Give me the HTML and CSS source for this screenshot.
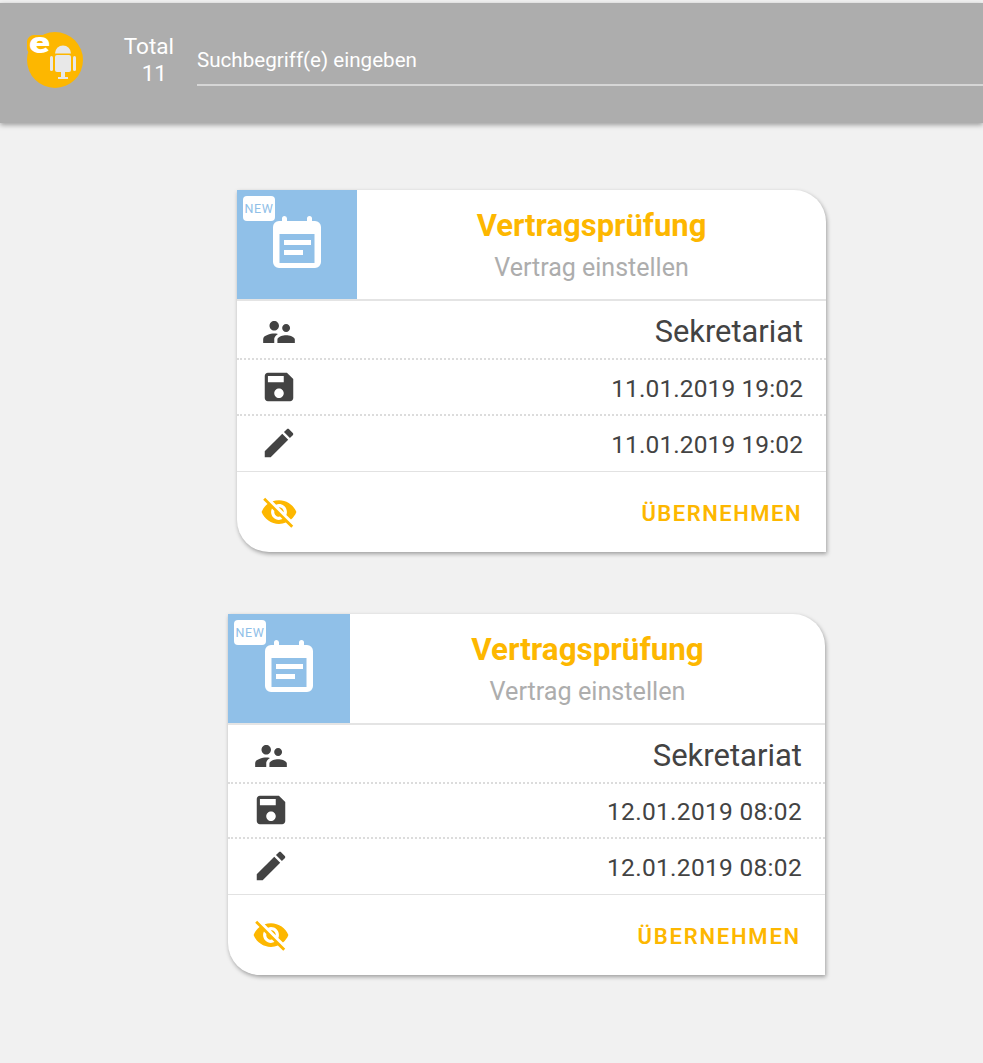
FILE: index.html
```html
<!DOCTYPE html>
<html lang="de">
<head>
    <meta charset="UTF-8">
    <title>Vertragsprüfung</title>
    <link rel="stylesheet" href="styles.css">
</head>
<body>
    <header class="topbar">
        <svg class="logo" viewBox="0 0 56 56">
            <circle cx="28" cy="28" r="28" fill="#fdb700"/>
            <path d="M0 9a7 7 0 0 1 7-6h10a7 7 0 0 1 8 6v8a6 6 0 0 1-6 6H7a7 7 0 0 1-7-6z" fill="#fdb700"/>
            <text class="logo-e" x="2" y="21" textLength="21" lengthAdjust="spacingAndGlyphs">e</text>
            <path d="M28 21.500a8 8 0 0 1 16 0z" fill="#e8e8e8"/>
            <rect x="28" y="23" width="16" height="17" rx="2" fill="#e8e8e8"/>
            <rect x="23" y="24" width="3" height="15" rx="1.500" fill="#e8e8e8"/>
            <rect x="46" y="24" width="3" height="15" rx="1.500" fill="#e8e8e8"/>
            <path d="M34 40h4v5h3v2H31v-2h3z" fill="#e8e8e8"/>
        </svg>
        <div class="total">
            <span>Total</span>
            <span class="total-count">11</span>
        </div>
        <input class="search" type="text" placeholder="Suchbegriff(e) eingeben">
    </header>

    <main class="list">
        <article class="card card-first">
            <div class="card-head">
                <div class="thumb">
                    <span class="badge">NEW</span>
                    <svg class="thumb-icon" viewBox="0 0 48 52">
                        <path d="M9 2.500a2.500 2.500 0 0 1 5 0V5h20V2.500a2.500 2.500 0 0 1 5 0V5h3a6 6 0 0 1 6 6v35a6 6 0 0 1-6 6H6a6 6 0 0 1-6-6V11a6 6 0 0 1 6-6h3z" fill="#fff"/>
                        <rect x="6.500" y="18" width="35" height="29" fill="#90c0e8"/>
                        <rect x="11" y="24" width="27" height="5" fill="#fff"/>
                        <rect x="11" y="34" width="19" height="5" fill="#fff"/>
                    </svg>
                </div>
                <div class="card-title">
                    <h2>Vertragsprüfung</h2>
                    <p>Vertrag einstellen</p>
                </div>
            </div>
            <div class="row row-group">
                <svg class="icon icon-group" viewBox="0 0 24 24"><path d="M16.500 12c1.380 0 2.490-1.120 2.490-2.500S17.880 7 16.500 7C15.120 7 14 8.120 14 9.500s1.120 2.500 2.500 2.500zM9 11c1.660 0 2.990-1.340 2.990-3S10.660 5 9 5C7.340 5 6 6.340 6 8s1.340 3 3 3zm7.500 3c-1.830 0-5.500.92-5.500 2.750V19h11v-2.250c0-1.830-3.670-2.750-5.500-2.750zM9 13c-2.330 0-7 1.170-7 3.500V19h7v-2.250c0-.85.33-2.340 2.370-3.470C10.500 13.100 9.660 13 9 13z"/></svg>
                <span>Sekretariat</span>
            </div>
            <div class="row">
                <svg class="icon" viewBox="0 0 24 24"><path d="M17 3H5c-1.110 0-2 .9-2 2v14c0 1.100.89 2 2 2h14c1.100 0 2-.9 2-2V7l-4-4zm-5 16c-1.660 0-3-1.340-3-3s1.340-3 3-3 3 1.340 3 3-1.340 3-3 3zm3-10H5V5h10v4z"/></svg>
                <span>11.01.2019 19:02</span>
            </div>
            <div class="row row-last">
                <svg class="icon" viewBox="0 0 24 24"><path d="M3 17.250V21h3.750L17.810 9.940l-3.750-3.750L3 17.250zM20.710 7.040c.39-.39.39-1.020 0-1.410l-2.340-2.340c-.39-.39-1.020-.39-1.410 0l-1.830 1.830 3.750 3.750 1.830-1.830z"/></svg>
                <span>11.01.2019 19:02</span>
            </div>
            <div class="card-actions">
                <svg class="icon icon-eye" viewBox="0 0 24 24"><path d="M12 7c2.760 0 5 2.240 5 5 0 .65-.13 1.260-.36 1.830l2.920 2.920c1.510-1.260 2.700-2.890 3.430-4.750-1.730-4.390-6-7.500-11-7.500-1.400 0-2.740.25-3.980.7l2.160 2.160C10.740 7.130 11.350 7 12 7zM2 4.270l2.280 2.280.46.46C3.080 8.300 1.780 10.020 1 12c1.730 4.390 6 7.500 11 7.500 1.550 0 3.030-.3 4.380-.84l.42.42L19.730 22 21 20.730 3.270 3 2 4.270zM7.530 9.800l1.550 1.550c-.05.21-.08.43-.08.65 0 1.660 1.340 3 3 3 .22 0 .44-.03.65-.08l1.550 1.550c-.67.33-1.410.53-2.200.53-2.760 0-5-2.240-5-5 0-.79.2-1.530.53-2.200zm4.310-.78l3.150 3.150.02-.16c0-1.660-1.340-3-3-3l-.17.01z"/></svg>
                <span class="action">ÜBERNEHMEN</span>
            </div>
        </article>

        <article class="card card-second">
            <div class="card-head">
                <div class="thumb">
                    <span class="badge">NEW</span>
                    <svg class="thumb-icon" viewBox="0 0 48 52">
                        <path d="M9 2.500a2.500 2.500 0 0 1 5 0V5h20V2.500a2.500 2.500 0 0 1 5 0V5h3a6 6 0 0 1 6 6v35a6 6 0 0 1-6 6H6a6 6 0 0 1-6-6V11a6 6 0 0 1 6-6h3z" fill="#fff"/>
                        <rect x="6.500" y="18" width="35" height="29" fill="#90c0e8"/>
                        <rect x="11" y="24" width="27" height="5" fill="#fff"/>
                        <rect x="11" y="34" width="19" height="5" fill="#fff"/>
                    </svg>
                </div>
                <div class="card-title">
                    <h2>Vertragsprüfung</h2>
                    <p>Vertrag einstellen</p>
                </div>
            </div>
            <div class="row row-group">
                <svg class="icon icon-group" viewBox="0 0 24 24"><path d="M16.500 12c1.380 0 2.490-1.120 2.490-2.500S17.880 7 16.500 7C15.120 7 14 8.120 14 9.500s1.120 2.500 2.500 2.500zM9 11c1.660 0 2.990-1.340 2.990-3S10.660 5 9 5C7.340 5 6 6.340 6 8s1.340 3 3 3zm7.500 3c-1.830 0-5.500.92-5.500 2.750V19h11v-2.250c0-1.830-3.670-2.750-5.500-2.750zM9 13c-2.330 0-7 1.170-7 3.500V19h7v-2.250c0-.85.33-2.340 2.370-3.470C10.500 13.100 9.660 13 9 13z"/></svg>
                <span>Sekretariat</span>
            </div>
            <div class="row">
                <svg class="icon" viewBox="0 0 24 24"><path d="M17 3H5c-1.110 0-2 .9-2 2v14c0 1.100.89 2 2 2h14c1.100 0 2-.9 2-2V7l-4-4zm-5 16c-1.660 0-3-1.340-3-3s1.340-3 3-3 3 1.340 3 3-1.340 3-3 3zm3-10H5V5h10v4z"/></svg>
                <span>12.01.2019 08:02</span>
            </div>
            <div class="row row-last">
                <svg class="icon" viewBox="0 0 24 24"><path d="M3 17.250V21h3.750L17.810 9.940l-3.750-3.750L3 17.250zM20.710 7.040c.39-.39.39-1.020 0-1.410l-2.340-2.340c-.39-.39-1.020-.39-1.410 0l-1.830 1.830 3.750 3.750 1.830-1.830z"/></svg>
                <span>12.01.2019 08:02</span>
            </div>
            <div class="card-actions">
                <svg class="icon icon-eye" viewBox="0 0 24 24"><path d="M12 7c2.760 0 5 2.240 5 5 0 .65-.13 1.260-.36 1.830l2.920 2.920c1.510-1.260 2.700-2.890 3.430-4.750-1.730-4.390-6-7.500-11-7.500-1.400 0-2.740.25-3.980.7l2.160 2.160C10.740 7.130 11.350 7 12 7zM2 4.270l2.280 2.280.46.46C3.080 8.300 1.780 10.020 1 12c1.730 4.390 6 7.500 11 7.500 1.550 0 3.030-.3 4.380-.84l.42.42L19.730 22 21 20.730 3.270 3 2 4.270zM7.530 9.800l1.550 1.550c-.05.21-.08.43-.08.65 0 1.660 1.340 3 3 3 .22 0 .44-.03.65-.08l1.550 1.550c-.67.33-1.410.53-2.200.53-2.760 0-5-2.240-5-5 0-.79.2-1.530.53-2.200zm4.310-.78l3.150 3.150.02-.16c0-1.660-1.340-3-3-3l-.17.01z"/></svg>
                <span class="action">ÜBERNEHMEN</span>
            </div>
        </article>
    </main>
</body>
</html>
```

FILE: styles.css
```css
* {
    box-sizing: border-box;
}

html, body {
    height: 100%;
}

body {
    margin: 0;
    padding-top: 3px;
    background: #f1f1f1;
    font-family: Roboto, "Liberation Sans", sans-serif;
    color: #434343;
    overflow: hidden;
}

.topbar {
    display: flex;
    align-items: flex-start;
    height: 120px;
    padding: 29px 0 0 27px;
    background: #adadad;
    box-shadow: 0 2px 5px rgba(0, 0, 0, 0.35);
}

.logo {
    width: 56px;
    height: 56px;
    flex: none;
    overflow: visible;
}

.logo-e {
    font-family: Roboto, sans-serif;
    font-weight: 900;
    font-size: 30px;
    fill: #fff;
}

.total {
    display: flex;
    flex-direction: column;
    align-items: flex-end;
    width: 91px;
    margin-top: 1px;
    font-size: 22.500px;
    line-height: 27px;
    color: #fff;
}

.total-count {
    padding-right: 7px;
}

.search {
    flex: 1;
    min-width: 0;
    height: 54px;
    margin-left: 23px;
    padding: 3px 0 0;
    border: none;
    border-bottom: 2px solid #d6d6d6;
    background: transparent;
    font-family: inherit;
    font-size: 20.600px;
    color: #fff;
    outline: none;
}

.search::placeholder {
    color: #fff;
    opacity: 1;
}

.list {
    display: flex;
    flex-direction: column;
    padding-top: 67px;
}

.card {
    background: #fff;
    border-radius: 0 32px 0 32px;
    box-shadow: 1px 2px 4px rgba(0, 0, 0, 0.35);
}

.card-first {
    width: 589px;
    margin-left: 237px;
}

.card-second {
    width: 597px;
    margin-top: 62px;
    margin-left: 228px;
}

.card-head {
    display: flex;
    height: 111px;
    border-bottom: 2px solid #e4e4e4;
}

.thumb {
    position: relative;
    display: flex;
    align-items: flex-start;
    flex: none;
    width: 120px;
    padding: 26px 0 0 36px;
    background: #90c0e8;
}

.card-second .thumb {
    width: 122px;
    padding-left: 37px;
}

.badge {
    position: absolute;
    top: 6px;
    left: 6px;
    width: 32px;
    height: 25px;
    border-radius: 4px;
    background: #fff;
    font-size: 12.500px;
    line-height: 25px;
    letter-spacing: 0.6px;
    text-align: center;
    color: #90c0e8;
}

.thumb-icon {
    width: 48px;
    height: 52px;
}

.card-title {
    flex: 1;
    padding-top: 18px;
    text-align: center;
}

.card-title h2 {
    margin: 0;
    font-size: 31px;
    line-height: 36px;
    font-weight: 700;
    color: #fdb700;
}

.card-title p {
    margin: 9px 0 0;
    font-size: 25px;
    line-height: 30px;
    color: #adadad;
}

.card-second .card-title h2 {
    font-size: 31.400px;
}

.card-second .card-title p {
    font-size: 25.200px;
}

.row {
    display: flex;
    align-items: center;
    justify-content: space-between;
    height: 56px;
    padding: 2px 23px 0;
    border-bottom: 2px dotted #dcdcdc;
    font-size: 24.500px;
    letter-spacing: 0.1px;
}

.row-group {
    height: 59px;
    padding-top: 4px;
    font-size: 30.800px;
    letter-spacing: 0;
}

.row-last {
    border-bottom: 1px solid #e2e2e2;
}

.card-second .row {
    height: 55px;
    padding-left: 24px;
    letter-spacing: 0.3px;
}

.card-second .row-group {
    height: 59px;
    font-size: 31px;
    letter-spacing: 0;
}

.card-second .row-last {
    height: 56px;
}

.icon {
    width: 38px;
    height: 38px;
    flex: none;
    margin-bottom: 3px;
    fill: #434343;
}

.icon-group {
    margin-bottom: 0;
}

.card-actions {
    display: flex;
    align-items: center;
    justify-content: space-between;
    height: 80px;
    padding: 2px 24px 0 23px;
}

.card-second .card-actions {
    padding-left: 24px;
}

.icon-eye {
    fill: #fdb700;
}

.action {
    font-size: 22px;
    font-weight: 600;
    letter-spacing: 1.500px;
    color: #fdb700;
}

.card-second .action {
    letter-spacing: 1.800px;
}
```
